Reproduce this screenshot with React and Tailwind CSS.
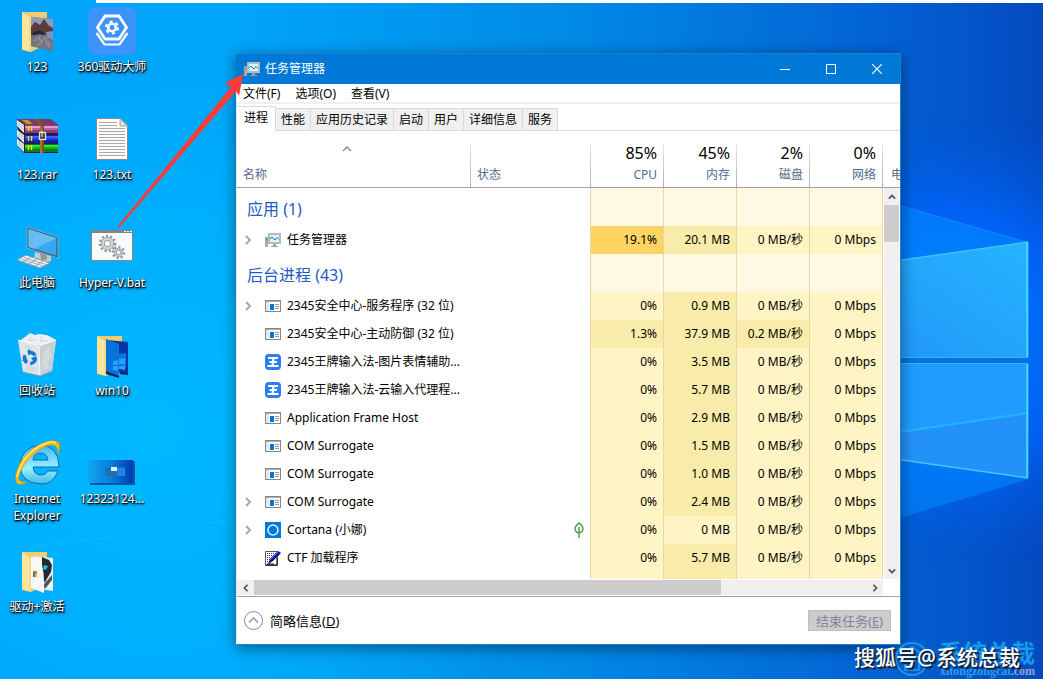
import React from "react";

function Wallpaper() {
  return (
    <svg className="absolute inset-0 h-full w-full" viewBox="0 0 1043 679" preserveAspectRatio="none" aria-hidden="true">
      <defs>
        <linearGradient id="base" x1="0" x2="1" y1="0" y2="0">
          <stop offset="0" stopColor="#00a4fa" />
          <stop offset="0.22" stopColor="#00a5f9" />
          <stop offset="0.55" stopColor="#008ae6" />
          <stop offset="0.84" stopColor="#0363d4" />
          <stop offset="1" stopColor="#0449c0" />
        </linearGradient>
        <radialGradient id="glow" gradientUnits="userSpaceOnUse" cx="150" cy="430" r="420">
          <stop offset="0" stopColor="#00b9ff" />
          <stop offset="0.5" stopColor="#00b4ff" stopOpacity="0.7" />
          <stop offset="1" stopColor="#00a8fa" stopOpacity="0" />
        </radialGradient>
        <radialGradient id="halo" gradientUnits="userSpaceOnUse" cx="950" cy="340" r="230">
          <stop offset="0" stopColor="#0080ff" />
          <stop offset="0.55" stopColor="#0064fc" stopOpacity="0.85" />
          <stop offset="1" stopColor="#0058d8" stopOpacity="0" />
        </radialGradient>
        <linearGradient id="pane" x1="0" x2="1" y1="1" y2="0">
          <stop offset="0" stopColor="#2095f6" />
          <stop offset="1" stopColor="#25b4ff" />
        </linearGradient>
      </defs>
      <rect width="1043" height="679" fill="url(#base)" />
      <rect width="1043" height="679" fill="url(#glow)" />
      <rect x="700" width="343" height="679" fill="url(#halo)" />
      <path d="M860 194L1026 242V480L860 530Z" fill="#0090ff" opacity="0.5" />
      <path d="M860 194L1026 242" stroke="#22a4ff" opacity="0.5" />
      <path d="M860 266L1028 242V357H860Z" fill="url(#pane)" />
      <path d="M860 363H1028V478L860 454Z" fill="#209cff" />
      <path d="M860 438L1028 413V478L860 454Z" fill="#2392f8" />
      <path d="M860 438L1028 413" stroke="#25b4ff" strokeWidth="2" />
      <path d="M860 358H1026V363H860Z" fill="#0672df" />
      <path d="M860 266L1028 242" stroke="#35c6ff" strokeWidth="1.5" />
      <path d="M860 454L1028 478" stroke="#45c6ff" strokeWidth="1.5" />
      <path d="M1027.300 242V357M1027.300 363V478" stroke="#48dcff" strokeWidth="2" />
      <path d="M860 357.500H1028M860 363.500H1028" stroke="#35b4ff" />
      <path d="M0 549Q120 538 240 518" stroke="#3cc4ff" opacity="0.25" fill="none" />
      <rect x="96" width="947" height="3" fill="#fcfcfc" />
    </svg>
  );
}

function FolderArt({ kind }) {
  return (
    <svg className="h-12 w-12" viewBox="0 0 48 48">
      <path d="M9 5H34V37L18 45L9 43Z" fill="#f0cc70" />
      {kind === "photo" && (
        <g>
          <path d="M18 10L40 12V44L18 39Z" fill="#6c6a7c" />
          <path d="M18 10L40 12V22L35 18L31 13L27 19L22 15L18 20Z" fill="#8d9cb8" />
          <path d="M18 20L22 15L27 18L31 12L36 19L40 21V28H18Z" fill="#5d3a3c" />
          <path d="M33 25L40 24V33L34 30Z" fill="#7898b6" />
          <path d="M18 34L24 28L30 26L34 31L40 35V44L18 39Z" fill="#777486" />
          <path d="M21 34L26 30L28 35L33 30L34 39M24 38L29 36M36 35V41" stroke="#a3989e" fill="none" />
          <path d="M20 27L26 25L31 27" stroke="#242838" strokeWidth="3" fill="none" />
        </g>
      )}
      {kind === "windows" && (
        <g>
          <path d="M19 9L40 11V43L19 39Z" fill="#0638a4" />
          <path d="M18 8L31 13V46L18 41Z" fill="#0872dc" />
          <path d="M31 23L38 22V37L31 35Z" fill="#0f74e4" />
          <path d="M25 30L30 29V34H25ZM31 28L37 27V33H31ZM25 35H30V40L25 39ZM31 35H37V39L31 38Z" fill="#22a0fa" />
          <path d="M18 40L31 45V47L18 43ZM32 41L40 42V44L32 43Z" fill="#0c2354" />
        </g>
      )}
      {kind === "app" && (
        <g>
          <path d="M20 9L40 11V44L20 41Z" fill="#eef1f4" />
          <path d="M29 10L36 13L39 18L38 25L32 35L29 35Z" fill="#252a33" />
          <path d="M31 18L35 19L33 23L30 22Z" fill="#1bc5d6" />
          <path d="M30 38L39 28V33L32 42Z" fill="#55555c" />
          <path d="M18 10L27 12Q32 23 31 46L18 41Z" fill="#f7f8fa" />
          <path d="M20 24H22V27H20Z" fill="#e84b30" />
          <path d="M22 24H24V27H22Z" fill="#72b52b" />
          <path d="M20 27H22V30H20Z" fill="#1684e0" />
          <path d="M22 27H24V30H22Z" fill="#f5b818" />
        </g>
      )}
      <path d="M9 5L18 10V45L9 42Z" fill="#fce59a" />
      <path d="M9 5L17 9V45" stroke="#e6c46d" fill="none" strokeWidth="0.7" />
    </svg>
  );
}

function DriverArt() {
  return (
    <svg className="h-12 w-12" viewBox="0 0 48 48">
      <rect width="48" height="48" rx="7" fill="#3c93fc" />
      <path d="M17 9H31L38.500 20.500L31 32H17L9.500 20.500Z" fill="none" stroke="#fff" strokeWidth="2.800" strokeLinejoin="round" />
      <path d="M8.500 26L16.500 37.500H31.500L39.500 26" fill="none" stroke="#fff" strokeWidth="2.200" />
      <circle cx="24" cy="20.500" r="3.800" fill="none" stroke="#fff" strokeWidth="2.600" />
      <circle cx="24" cy="20.500" r="6" fill="none" stroke="#fff" strokeWidth="2.200" strokeDasharray="3.100 3.180" />
    </svg>
  );
}

function RarArt() {
  const books = [
    [7, "#8e3a80", "#e09ad8"],
    [17, "#1020b0", "#3d62ff"],
    [26, "#08801a", "#35e035"],
  ];
  return (
    <svg className="h-12 w-12" viewBox="0 0 48 48">
      <path d="M4 4H37L45 10V38H11L4 30L7 27L4 21L7 18L4 12Z" fill="#2e1c28" />
      <path d="M4 4H37L45 10H12Z" fill="#7a3a68" />
      <path d="M9 5H15L20 9H14Z" fill="#b5a422" />
      {books.map(([y, dark, light]) => (
        <g key={dark}>
          <path d={`M4 ${y - 2}L11 ${y + 3}V${y + 11}L4 ${y + 4}Z`} fill="#eef3f5" />
          <path d={`M5 ${y + 1}L11 ${y + 5}M5 ${y + 3}L11 ${y + 8}`} stroke="#8b99a2" strokeWidth="0.7" />
          <rect x="12" y={y + 3} width="33" height="8" fill={dark} />
          <rect x="12" y={y + 4} width="33" height="2" fill={light} />
          <rect x="12" y={y + 6} width="33" height="2" fill={light} opacity="0.45" />
          <path d={`M15.500 ${y + 4}V${y + 9}M18.500 ${y + 4}V${y + 9}`} stroke="#f1df21" strokeWidth="1.500" />
        </g>
      ))}
      <path d="M20 4H25L31 10V38H27V11Z" fill="#89501f" />
      <path d="M28 11V38" stroke="#c98c45" />
      <rect x="26.500" y="17.500" width="6" height="7" fill="#3b3c3d" stroke="#e0e0dc" strokeWidth="1.300" />
      <path d="M29 16V22" stroke="#fff" />
    </svg>
  );
}

function TextArt() {
  return (
    <svg className="h-12 w-12" viewBox="0 0 48 48">
      <path d="M8.500 3.500H32L39.500 11V44.500H8.500Z" fill="#fbfbfb" stroke="#8a8a8a" />
      <path d="M32 3.500V11H39.500Z" fill="#e2e2e2" stroke="#a1a1a1" />
      <path d="M11 7.500H29M11 10.500H29M11 13.500H37M11 16.500H37M11 19.500H37M11 22.500H37M11 25.500H37M11 28.500H37M11 31.500H37M11 34.500H37M11 37.500H37M11 40.500H37" stroke="#a8a8a8" />
    </svg>
  );
}

function ComputerArt() {
  return (
    <svg className="h-12 w-12" viewBox="0 0 48 48">
      <path d="M22 29L38 33V38L31 40L21 37Z" fill="#c3ccd1" />
      <path d="M27 29L34 32V37H28Z" fill="#8f999e" />
      <path d="M14 4L45 14V35L14 25Z" fill="#2d5372" stroke="#9eb1bd" strokeWidth="0.8" />
      <path d="M15.500 6L43.500 15V33L15.500 24Z" fill="#3ba5f0" />
      <path d="M15.500 6L43.500 15L22 26L15.500 24Z" fill="#66bdf6" />
      <path d="M4 37L13 32L37 40L27 45Z" fill="#eef2f4" stroke="#8797a0" />
      <path d="M8 36L30 43M11 34.500L33 41.500M10 39L18 34M16 41L24 36M22 43L30 38" stroke="#8797a0" strokeWidth="0.8" />
    </svg>
  );
}

function Gear({ x, y, r }) {
  return (
    <g transform={`translate(${x} ${y})`}>
      <circle r={r} fill="none" stroke="#8d969b" strokeWidth="2.500" strokeDasharray="2 2.200" />
      <circle r={r - 1.300} fill="#d3d9dc" stroke="#9ea6aa" />
      <circle r={r / 2.300} fill="#f7f7f7" stroke="#929a9f" />
    </g>
  );
}

function BatchArt() {
  return (
    <svg className="h-12 w-12" viewBox="0 0 48 48">
      <rect x="3.500" y="7.500" width="41" height="30" fill="#fafafa" stroke="#85898c" />
      <path d="M3 7H45V10H3Z" fill="#808487" />
      <path d="M36 8.500H38M39 8.500H41M42 8.500H44" stroke="#fff" />
      <Gear x={19.500} y={20.500} r={7.500} />
      <Gear x={30.500} y={29.500} r={5.500} />
    </svg>
  );
}

function BinArt() {
  return (
    <svg className="h-12 w-12" viewBox="0 0 48 48">
      <path d="M6 10L12 6L17 2L22 4L26 3L33 4L36 5L43 9L39 14H9Z" fill="#eef1f3" />
      <path d="M5 9L26 15L43 9L39 40L27 45L10 41Z" fill="#dfe5e8" />
      <path d="M26 15L43 9L39 40L27 45Z" fill="#c4ced5" />
      <path d="M31 20L36 16L39 26L34 31L37 37L31 40L29 31ZM12 14L20 17L16 20ZM14 33L24 37L20 41L13 39Z" fill="#d3dbe0" />
      <path d="M5 9L26 15L43 9M26 15L27 45" fill="none" stroke="#f6f8f9" />
      <path d="M19 6L15 10L23 9M29 5L27 10L35 10" stroke="#c9d1d7" fill="none" />
      <circle cx="17" cy="27" r="5.500" fill="none" stroke="#1876d2" strokeWidth="3.400" strokeDasharray="8.200 3.310" />
      <path d="M15 18L21 22L15 24ZM24 25L21 31L18 27ZM9 30L12 25L15 30Z" fill="#1876d2" />
      <path d="M10 41L27 45L39 40" stroke="#8e9aa2" fill="none" />
    </svg>
  );
}

function ExplorerArt() {
  return (
    <svg className="h-12 w-12" viewBox="0 0 48 48">
      <defs>
        <linearGradient id="ie" x1="0" y1="0" x2="0" y2="1">
          <stop offset="0" stopColor="#42b9ed" />
          <stop offset="0.6" stopColor="#9af0ff" />
          <stop offset="1" stopColor="#3eb9ec" />
        </linearGradient>
      </defs>
      <path d="M46 28H20Q21 36 28 36Q33 36 35 32H45Q40 46 27 45Q8 44 7 27Q8 8 27 6Q46 7 46 28ZM20 21H35Q34 14 27 14Q21 14 20 21Z" fill="url(#ie)" stroke="#1469a4" />
      <path d="M9 45Q1 47 3 35Q7 18 24 7Q38 -1 45 3Q48 6 45 15Q45 8 41 6Q33 5 23 13Q9 25 6 37Q4 44 14 43Q12 45 9 45Z" fill="#f5b91b" stroke="#dc9708" strokeWidth="0.6" />
      <path d="M4 38Q8 19 25 8Q38 1 43 4" stroke="#ffeb70" fill="none" strokeWidth="1.500" />
    </svg>
  );
}

function ThumbArt() {
  return (
    <svg className="h-12 w-12" viewBox="0 0 48 48">
      <defs>
        <linearGradient id="thumb">
          <stop offset="0" stopColor="#10a5ef" />
          <stop offset="0.5" stopColor="#067fe0" />
          <stop offset="1" stopColor="#0539b0" />
        </linearGradient>
      </defs>
      <path d="M2 45H46V22" fill="none" stroke="#055ba8" strokeWidth="2" />
      <path d="M0 21H45V44H0Z" fill="url(#thumb)" />
      <path d="M17 28H36V37H17Z" fill="#1b72ae" />
      <path d="M29 29H37V37H29Z" fill="#1c84e8" />
      <path d="M23 28H29V32H23Z" fill="#e4eef4" />
    </svg>
  );
}

const shortcuts = [
  ["123", <FolderArt kind="photo" />],
  ["360驱动大师", <DriverArt />],
  ["123.rar", <RarArt />],
  ["123.txt", <TextArt />],
  ["此电脑", <ComputerArt />],
  ["Hyper-V.bat", <BatchArt />],
  ["回收站", <BinArt />],
  ["win10", <FolderArt kind="windows" />],
  ["Internet Explorer", <ExplorerArt />],
  ["12323124...", <ThumbArt />],
  ["驱动+激活", <FolderArt kind="app" />],
];

function MonitorIcon() {
  return (
    <svg className="h-4 w-4 shrink-0" viewBox="0 0 16 16" aria-hidden="true">
      <path d="M0 5H3V15H0Z" fill="#a5a9ab" />
      <path d="M1 6H2V8H1Z" fill="#25c435" />
      <rect x="3.500" y="1.500" width="12" height="10" fill="#e9f6fc" stroke="#b5babd" />
      <rect x="4.500" y="2.500" width="10" height="8" fill="#dff3fc" stroke="#a9bfca" />
      <path d="M5 7L7 5L10 8L12 5.500L14 7.500" fill="none" stroke="#167ab0" />
      <path d="M8 12H11V14H13V15H6V14H8Z" fill="#9a9fa2" />
    </svg>
  );
}

function AppIcon({ kind }) {
  if (kind === "monitor") return <MonitorIcon />;
  return (
    <svg className="h-4 w-4 shrink-0" viewBox="0 0 16 16" aria-hidden="true">
      {kind === "window" && (
        <g>
          <rect x="0.500" y="2.500" width="15" height="11" fill="#fff" stroke="#85898d" />
          <path d="M1 3H15V4H1Z" fill="#a8abad" />
          <path d="M1 4H4V13H1Z" fill="#e8e8e8" />
          <rect x="5" y="6" width="4" height="6" fill="#0078d7" />
          <path d="M10 6.500H14M10 8.500H14M10 10.500H14" stroke="#9a9a9a" />
        </g>
      )}
      {kind === "ime" && (
        <g>
          <rect width="16" height="16" rx="4" fill="#2b7cf6" />
          <path d="M3 4H13M4.500 8H12M2.500 12H13.500" stroke="#fff" strokeWidth="1.800" />
          <path d="M8.500 4L7.500 12" stroke="#fff" strokeWidth="2.200" />
        </g>
      )}
      {kind === "cortana" && (
        <g>
          <rect width="16" height="16" fill="#0078d7" />
          <circle cx="8" cy="8" r="5" fill="none" stroke="#e2f2ff" strokeWidth="1.500" />
        </g>
      )}
      {kind === "ctf" && (
        <g>
          <path d="M0.500 1.500H12.500V15.500H0.500Z" fill="#fff" stroke="#555" />
          <path d="M2 3.500H11M2 5.500H10M2 7.500H8M2 9.500H7M2 11.500H5" stroke="#333" strokeDasharray="1 1" />
          <path d="M3 14L5 9L13 1L16 3L8 11Z" fill="#0b0b70" />
          <path d="M5 10L13 2" stroke="#3f59ef" strokeWidth="1.500" />
          <path d="M2 14H9M12 8V15H1" stroke="#000" fill="none" />
        </g>
      )}
    </svg>
  );
}

function Chevron({ className, d, thick }) {
  return (
    <svg className={className} viewBox="0 0 10 10" aria-hidden="true">
      <path d={d} fill="none" stroke="currentColor" strokeWidth={thick ? 2 : 1.300} />
    </svg>
  );
}

const UP = "M1 7L5 3L9 7";
const DOWN = "M1 3L5 7L9 3";
const LEFT = "M7 1L3 5L7 9";
const RIGHT = "M3 1L7 5L3 9";

const columns = [
  ["85%", "CPU"],
  ["45%", "内存"],
  ["2%", "磁盘"],
  ["0%", "网络"],
];

const idle = "bg-[#fff4c4]";
const low = "bg-[#f9ecaa]";
const high = "bg-[#ffd465]";

const rows = [
  { group: "应用 (1)" },
  { name: "任务管理器", icon: "monitor", open: true, values: ["19.1%", "20.1 MB", "0 MB/秒", "0 Mbps"], tones: [high, low, idle, idle] },
  { group: "后台进程 (43)" },
  { name: "2345安全中心-服务程序 (32 位)", icon: "window", open: true, values: ["0%", "0.9 MB", "0 MB/秒", "0 Mbps"] },
  { name: "2345安全中心-主动防御 (32 位)", icon: "window", values: ["1.3%", "37.9 MB", "0.2 MB/秒", "0 Mbps"], tones: [low, low, low, idle] },
  { name: "2345王牌输入法-图片表情辅助...", icon: "ime", values: ["0%", "3.5 MB", "0 MB/秒", "0 Mbps"] },
  { name: "2345王牌输入法-云输入代理程...", icon: "ime", values: ["0%", "5.7 MB", "0 MB/秒", "0 Mbps"] },
  { name: "Application Frame Host", icon: "window", values: ["0%", "2.9 MB", "0 MB/秒", "0 Mbps"] },
  { name: "COM Surrogate", icon: "window", values: ["0%", "1.5 MB", "0 MB/秒", "0 Mbps"] },
  { name: "COM Surrogate", icon: "window", values: ["0%", "1.0 MB", "0 MB/秒", "0 Mbps"] },
  { name: "COM Surrogate", icon: "window", open: true, values: ["0%", "2.4 MB", "0 MB/秒", "0 Mbps"] },
  { name: "Cortana (小娜)", icon: "cortana", open: true, leaf: true, values: ["0%", "0 MB", "0 MB/秒", "0 Mbps"], tones: [idle, idle, idle, idle] },
  { name: "CTF 加载程序", icon: "ctf", values: ["0%", "5.7 MB", "0 MB/秒", "0 Mbps"] },
];
const defaultTones = [idle, low, idle, idle];

function VerticalScrollbar() {
  return (
    <div className="absolute inset-y-0 right-px left-px flex flex-col bg-[#f0f0f0] text-[#505050]">
      <button aria-label="向上滚动" className="flex h-[17px] items-center justify-center">
        <Chevron className="h-2 w-2" d={UP} thick />
      </button>
      <div className="h-[37px] bg-[#cdcdcd]" />
      <div className="flex-1" />
      <button aria-label="向下滚动" className="flex h-[17px] items-center justify-center">
        <Chevron className="h-2 w-2" d={DOWN} thick />
      </button>
    </div>
  );
}

function ProcessTable() {
  const separator = "w-px self-stretch bg-gradient-to-b from-[#e6e6e6] to-[#b0b0b0]";
  return (
    <table className="w-full table-fixed border-separate border-spacing-0 text-[12px] leading-4">
      <colgroup>
        <col />
        <col className="w-[120px]" />
        <col className="w-[73px]" />
        <col className="w-[73px]" />
        <col className="w-[73px]" />
        <col className="w-[73px]" />
        <col className="w-[17px]" />
      </colgroup>
      <thead>
        <tr className="text-[#566a8c]">
          <th className="border-b border-[#a0a0a0] p-0 pt-[13px] font-normal">
            <div className="flex h-[43px]">
              <div className="flex flex-1 flex-col items-start justify-between pb-1 pl-[6px]">
                <Chevron className="mr-5 h-[10px] w-[10px] self-center text-[#7c8794]" d={UP} />
                <span>名称</span>
              </div>
              <div className={separator} />
            </div>
          </th>
          <th className="border-b border-[#a0a0a0] p-0 pt-[13px] font-normal">
            <div className="flex h-[43px]">
              <span className="flex-1 self-end pb-1 pl-[6px] text-left">状态</span>
              <div className={separator} />
            </div>
          </th>
          {columns.map(([total, label]) => (
            <th key={label} className="border-b border-[#a0a0a0] p-0 pt-[13px] font-normal">
              <div className="flex h-[43px]">
                <div className="flex flex-1 flex-col items-end justify-between pr-[6px] pb-1">
                  <span className="text-[16px] leading-[18px] text-black">{total}</span>
                  <span>{label}</span>
                </div>
                <div className={separator} />
              </div>
            </th>
          ))}
          <th className="border-b border-[#a0a0a0] p-0 pt-[13px] font-normal">
            <div className="flex h-[43px] items-end overflow-hidden pb-1 pl-2 whitespace-nowrap">电</div>
          </th>
        </tr>
      </thead>
      <tbody>
        {rows.map((row, i) => (
          <tr key={i} className={row.group ? "h-[38px]" : "h-7"}>
            {row.group ? (
              <th scope="rowgroup" colSpan={2} className="border-r border-[#ebd6a0] p-0 pt-1 pl-[10px] text-left text-[16px] font-normal text-[#1f5bc4]">
                {row.group}
              </th>
            ) : (
              <>
                <td className="p-0 whitespace-nowrap">
                  <div className="flex items-center pl-[6px]">
                    <div className="flex w-[22px] text-[#a6a6a6]">
                      {row.open && (
                        <button aria-label="展开">
                          <Chevron className="h-[10px] w-[10px]" d={RIGHT} thick />
                        </button>
                      )}
                    </div>
                    <AppIcon kind={row.icon} />
                    <span className="pl-[6px]">{row.name}</span>
                  </div>
                </td>
                <td className="border-r border-[#ebd6a0] p-0 pr-[5px]">
                  {row.leaf && (
                    <svg className="ml-auto h-4 w-[12px]" viewBox="0 0 12 16" aria-label="已暂停">
                      <path d="M6 1Q10 4 10 7Q9.500 10.500 6 11Q2.500 10.500 2 7Q2 4 6 1ZM6 5V16" fill="none" stroke="#2c9b3a" strokeWidth="1.300" />
                    </svg>
                  )}
                </td>
              </>
            )}
            {columns.map(([, label], c) => (
              <td
                key={label}
                className={`border-r border-[#ebd6a0] p-0 pr-[6px] text-right whitespace-nowrap ${row.group ? "bg-[#fff8e3]" : (row.tones || defaultTones)[c]}`}
              >
                {row.values ? row.values[c] : null}
              </td>
            ))}
            {i === 0 && (
              <td rowSpan={rows.length + 1} className="relative p-0">
                <VerticalScrollbar />
              </td>
            )}
          </tr>
        ))}
        <tr className="h-[7px]">
          <td colSpan={2} className="border-r border-[#ebd6a0] p-0" />
          {defaultTones.map((tone, i) => (
            <td key={i} className={`border-r border-[#ebd6a0] p-0 ${tone}`} />
          ))}
        </tr>
      </tbody>
    </table>
  );
}

const tabs = ["性能", "应用历史记录", "启动", "用户", "详细信息", "服务"];

function TaskManager() {
  return (
    <main className="absolute top-[53px] left-[236px] w-[665px] border border-[#1883d7] border-l-[#e8e8e8] bg-white text-[12px] leading-4 text-black shadow-[0_3px_14px_rgba(0,0,0,0.45)]">
      <header className="-ml-px flex h-[30px] items-center bg-[#0078d7] pl-2 text-white">
        <MonitorIcon />
        <h1 className="flex-1 pl-[5px]">任务管理器</h1>
        <button aria-label="最小化" className="flex h-full w-[46px] items-center justify-center">
          <svg className="h-[10px] w-[10px]" viewBox="0 0 10 10"><path d="M0 5.500H10" stroke="#fff" /></svg>
        </button>
        <button aria-label="最大化" className="flex h-full w-[46px] items-center justify-center">
          <svg className="h-[10px] w-[10px]" viewBox="0 0 10 10"><rect x="0.500" y="0.500" width="9" height="9" fill="none" stroke="#fff" /></svg>
        </button>
        <button aria-label="关闭" className="flex h-full w-[46px] items-center justify-center">
          <svg className="h-[10px] w-[10px]" viewBox="0 0 10 10"><path d="M0 0L10 10M10 0L0 10" stroke="#fff" strokeWidth="1.200" /></svg>
        </button>
      </header>
      <nav className="flex h-5 gap-[15px] border-b-2 border-[#f0f0f0] pt-[2px] pl-[6px]">
        <button>文件(F)</button>
        <button>选项(O)</button>
        <button>查看(V)</button>
      </nav>
      <div className="flex h-[27px] items-end border-b border-[#d9d9d9]" role="tablist">
        <button role="tab" aria-selected="true" className="-mb-px h-[25px] border-t border-r border-[#d9d9d9] bg-white px-[7px] pb-[2px]">进程</button>
        {tabs.map((tab) => (
          <button key={tab} role="tab" aria-selected="false" className="h-[22px] border-t border-r border-[#d9d9d9] bg-[#f0f0f0] px-[5px]">
            {tab}
          </button>
        ))}
      </div>
      <ProcessTable />
      <div className="mt-px mr-[17px] flex h-[15px] bg-[#f0f0f0] text-[#505050]">
        <button aria-label="向左滚动" className="flex w-[17px] items-center justify-center">
          <Chevron className="h-2 w-2" d={LEFT} thick />
        </button>
        <div className="w-[467px] bg-[#cdcdcd]" />
        <div className="flex-1" />
        <button aria-label="向右滚动" className="flex w-[17px] items-center justify-center">
          <Chevron className="h-2 w-2" d={RIGHT} thick />
        </button>
      </div>
      <footer className="mt-px flex h-[48px] items-center justify-between border-t border-[#a0a0a0] pr-[9px] pl-[7px] text-[13px]">
        <button className="flex items-center gap-[7px]">
          <svg className="h-[19px] w-[19px]" viewBox="0 0 19 19" aria-hidden="true">
            <circle cx="9.500" cy="9.500" r="9" fill="none" stroke="#8a8a8a" />
            <path d="M5 11.500L9.500 7L14 11.500" fill="none" stroke="#aaa" strokeWidth="1.800" />
          </svg>
          <span>简略信息(<u>D</u>)</span>
        </button>
        <button disabled className="flex h-[21px] w-[83px] items-center justify-center border border-[#bfbfbf] bg-[#cccccc] text-[#83839b]">
          <span>结束任务(<u>E</u>)</span>
        </button>
      </footer>
    </main>
  );
}

function Watermark() {
  return (
    <div className="absolute right-2 bottom-0 h-[42px] w-[182px]">
      <svg className="absolute top-[3px] left-[41px] h-[38px] w-[36px]" viewBox="0 0 36 38" aria-hidden="true">
        <circle cx="18" cy="19" r="16" fill="none" stroke="#1e92e4" strokeWidth="2" />
        <path d="M10 13L18 7L26 13M11 17V30H25V17ZM15 21H21M15 25H21" fill="none" stroke="#1e92e4" strokeWidth="2" />
      </svg>
      <div className="absolute top-[2px] right-0 text-[24px] leading-7 font-bold text-[#159be8]">系统总裁</div>
      <div className="absolute right-0 bottom-0 font-['Liberation_Serif',serif] text-[12px] leading-4 font-bold text-[#2c9fe8]">
        xitongzongcai<span className="text-[#8fa9c4]">.com</span>
      </div>
      <div className="absolute top-1 left-px text-[21px] leading-8 font-medium whitespace-nowrap text-white [text-shadow:2px_2px_1px_#10243c,1px_1px_0_#10243c]">
        搜狐号@系统总裁
      </div>
    </div>
  );
}

export default function App() {
  return (
    <div className="relative h-screen min-h-[650px] overflow-hidden bg-[#00a8fb] font-['Noto_Sans','Noto_Sans_CJK_SC',sans-serif]">
      <Wallpaper />
      <div className="relative grid w-[149px] auto-rows-[108px] grid-cols-2 gap-x-px text-[12px] leading-[17px] text-white">
        {shortcuts.map(([label, art]) => (
          <button key={label} className="flex flex-col items-center gap-[3px] pt-[7px]">
            {art}
            <span className="[text-shadow:1px_1px_1px_#000,0_1px_2px_#000,1px_2px_3px_#0008]">{label}</span>
          </button>
        ))}
      </div>
      <TaskManager />
      <svg className="pointer-events-none absolute top-0 left-0 h-[240px] w-[260px]" viewBox="0 0 260 240" aria-hidden="true">
        <path d="M243 74L225 83L231 87L118 226L119 228L236 91L239 96Z" fill="#fd3b38" />
      </svg>
      <Watermark />
    </div>
  );
}
